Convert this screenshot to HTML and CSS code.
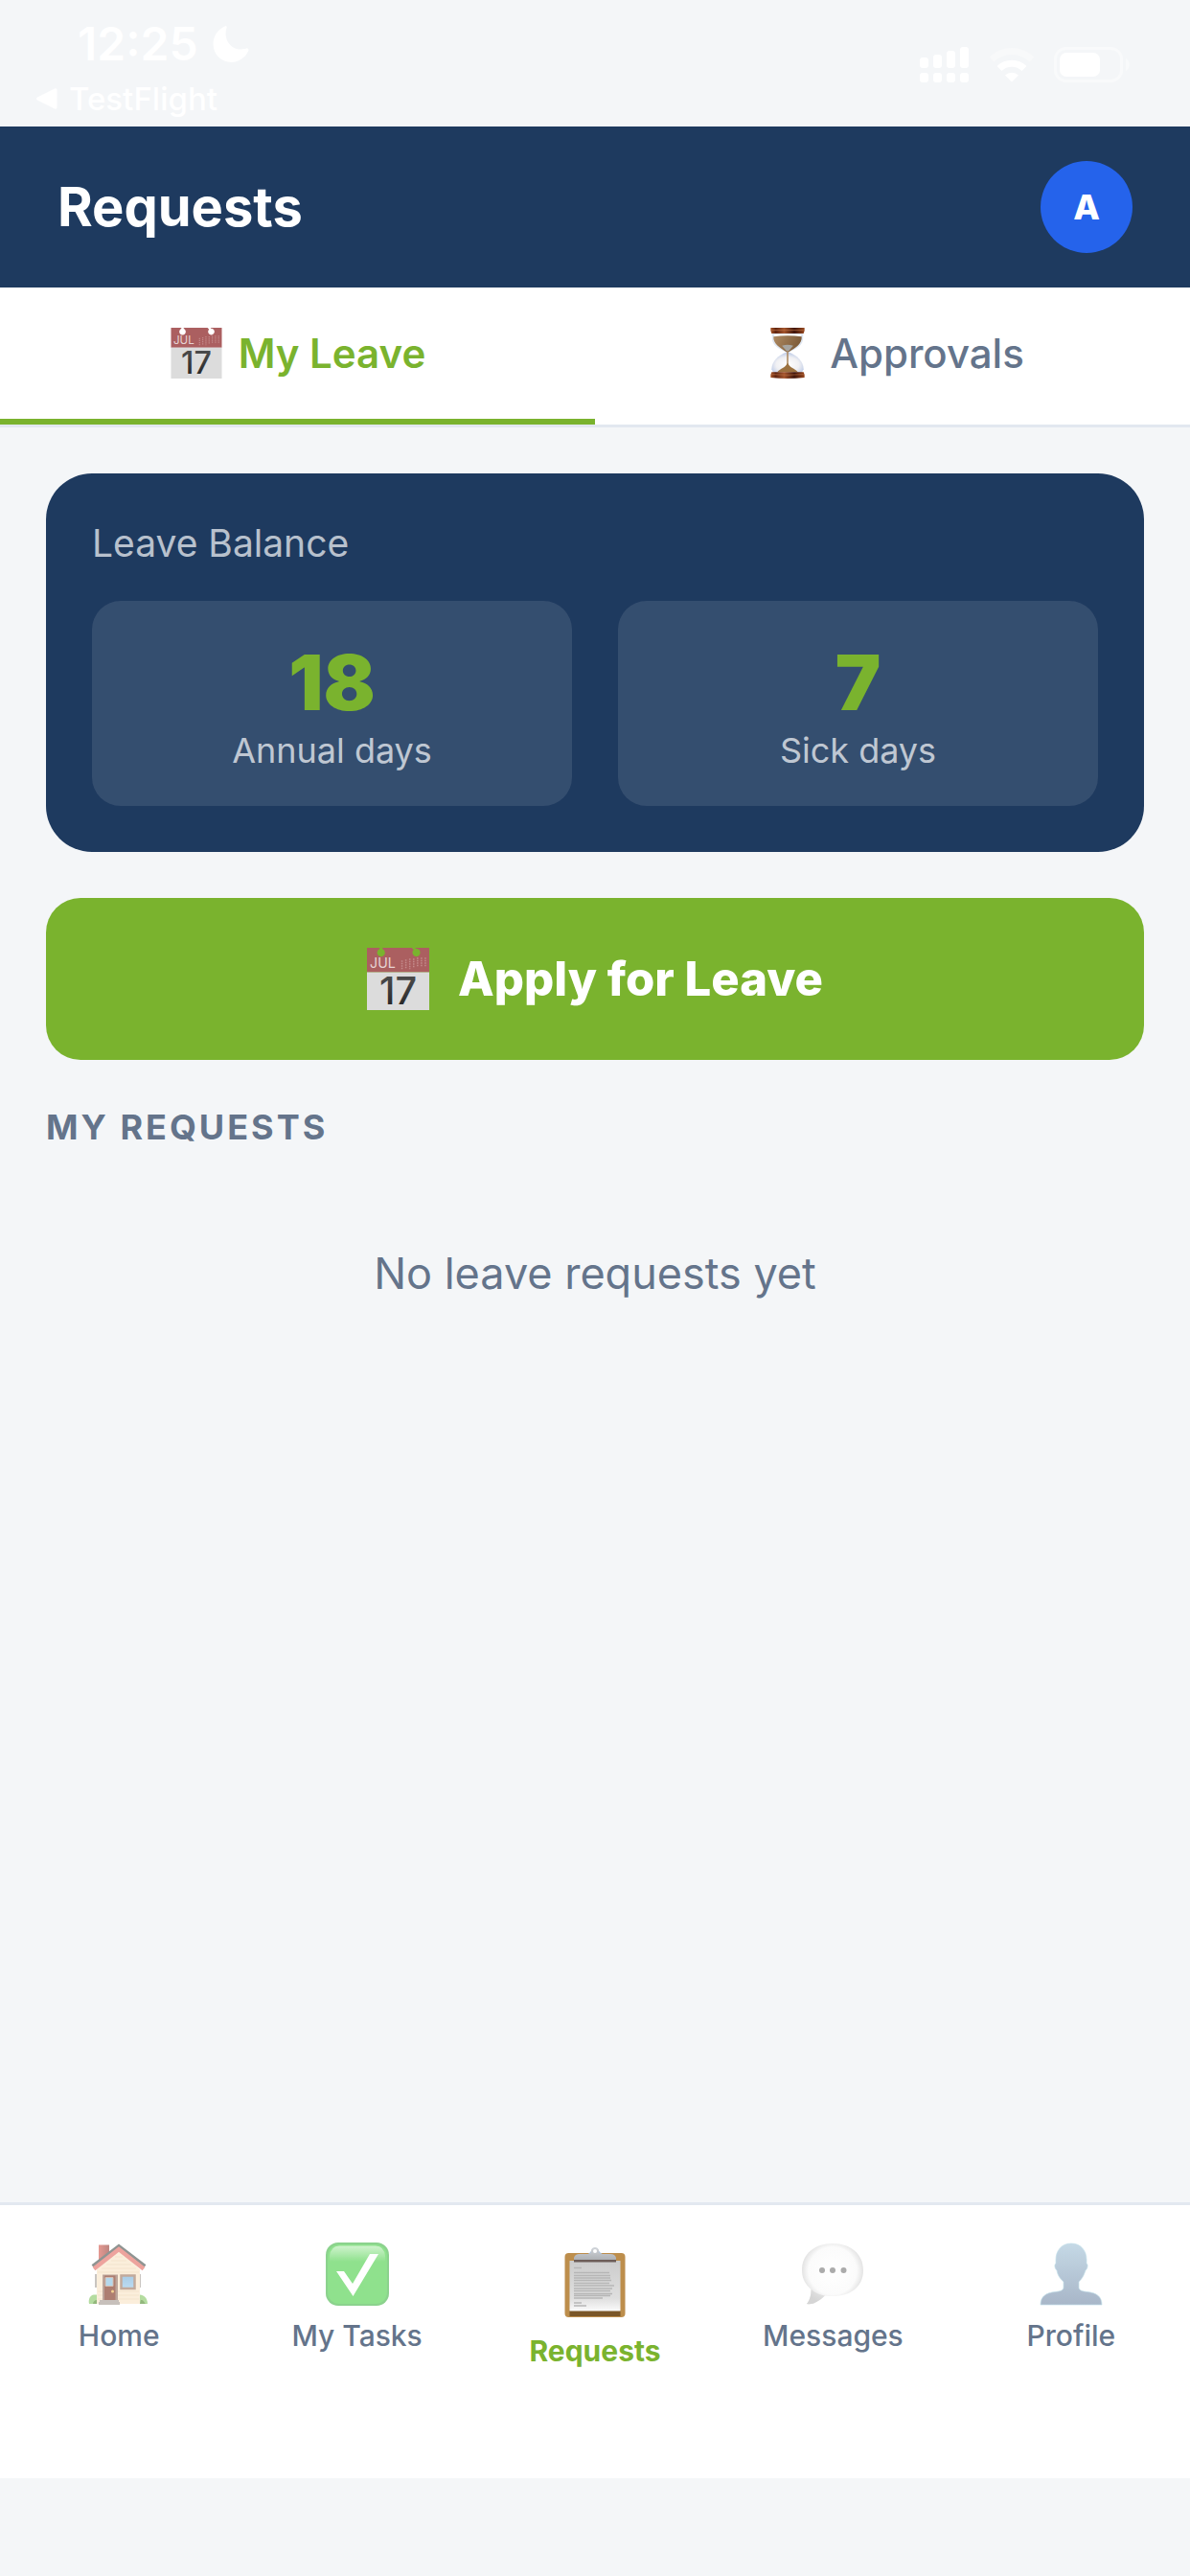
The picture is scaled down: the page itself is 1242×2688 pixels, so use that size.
FILE: index.html
```html
<!DOCTYPE html>
<html lang="en">
<head>
  <meta charset="UTF-8">
  <meta name="viewport" content="width=device-width, initial-scale=1.0">
  <title>Requests</title>
  <link rel="stylesheet" href="styles.css">
</head>
<body>
  <div class="status-bar">
    <div class="status-left">
      <div class="clock">
        <span>12:25</span>
        <svg class="moon" viewBox="0 0 38 38" aria-hidden="true"><path fill="#fff" d="M12.500.500c1.500-.8 2.600.2 2 1.700C13 6 13 12 16 17c4 6.500 11 9 18.500 6.700 2-.7 3.500.6 2.800 2.200C34 33 27.500 38 19.500 38 9 38 .5 29.500.5 19 .5 11 5 4 12.500.500z"/></svg>
      </div>
      <a class="back-link" href="#">
        <svg class="back-arrow" viewBox="0 0 22 22" aria-hidden="true"><path fill="#fff" d="M1 9.500 19 .6c1.600-.7 2.500 0 2.500 1.600v17.600c0 1.600-.9 2.300-2.500 1.600L1 12.500c-1.300-.8-1.300-2.200 0-3z"/></svg>
        <span>TestFlight</span>
      </a>
    </div>
    <div class="status-icons">
      <svg width="52" height="38" viewBox="0 0 52 38" fill="#fff" aria-hidden="true">
        <rect x="0" y="11" width="9" height="11" rx="3"/><rect x="14" y="8" width="9" height="14" rx="3"/>
        <rect x="28" y="4" width="9" height="18" rx="3"/><rect x="42" y="0" width="9" height="22" rx="3"/>
        <rect x="0" y="27" width="9" height="10" rx="3"/><rect x="14" y="27" width="9" height="10" rx="3"/>
        <rect x="28" y="27" width="9" height="10" rx="3"/><rect x="42" y="27" width="9" height="10" rx="3"/>
      </svg>
      <svg width="48" height="38" viewBox="0 0 48 38" fill="none" aria-hidden="true">
        <path stroke="#f8f9fa" stroke-width="7" d="M3 13a30 30 0 0 1 42 0"/>
        <path stroke="#fff" stroke-width="7" d="M11 22.500a18.500 18.500 0 0 1 26 0"/>
        <path fill="#fff" d="M17 29.500a10.500 10.500 0 0 1 14 0L24 36.500z"/>
      </svg>
      <svg width="80" height="38" viewBox="0 0 80 38" aria-hidden="true">
        <rect x="1.500" y="1.500" width="69" height="34" rx="11" fill="none" stroke="#f9fafb" stroke-width="3"/>
        <rect x="6" y="6" width="42" height="25" rx="7" fill="#fff"/>
        <path fill="#f9fafb" d="M75 12c5 2.500 5 10.500 0 13z"/>
      </svg>
    </div>
  </div>

  <header class="app-header">
    <h1>Requests</h1>
    <button class="avatar" type="button" aria-label="Account">A</button>
  </header>

  <div class="tabs">
    <button class="tab active" type="button">
      <svg class="tab-icon" viewBox="0 0 64 64" aria-hidden="true">
        <defs>
          <linearGradient id="ink" x1="0" y1="0" x2="0" y2="1">
            <stop offset="0" stop-color="#555"/>
            <stop offset="1" stop-color="#1f1f1f"/>
          </linearGradient>
        </defs>
        <path fill="#ab5f60" fill-rule="evenodd" d="M0 0H13V1.300A4 4 0 1 0 16 1.300V0H46L48 2A4 4 0 1 0 50 1V0H64V25H0Z"/>
        <path fill="#dcdcdc" d="M0 25h64v39H0z"/>
        <text class="cal-month" x="3" y="21">JUL</text>
        <path stroke="#c48b8b" stroke-width="1.500" stroke-dasharray="1.500 1" d="M36 13v9M40 12v10M44 11v11M48 11v10M52 10v10M56 10v10M60 10v9"/>
        <text class="cal-day" x="32" y="58">17</text>
      </svg>
      <span>My Leave</span>
    </button>
    <button class="tab" type="button">
      <svg class="tab-icon" viewBox="0 0 56 54" aria-hidden="true">
        <defs>
          <linearGradient id="wood" x1="0" x2="1" y1="0" y2="0">
            <stop offset="0" stop-color="#a85527"/><stop offset=".15" stop-color="#5f2410"/><stop offset=".4" stop-color="#a3542c"/>
            <stop offset=".7" stop-color="#3f1409"/><stop offset="1" stop-color="#98481f"/>
          </linearGradient>
          <linearGradient id="sand" x1="0" x2="1" y1="0" y2=".3">
            <stop offset="0" stop-color="#ae8a62"/><stop offset="1" stop-color="#7d5b38"/>
          </linearGradient>
          <radialGradient id="glass" cx=".5" cy=".6" r=".6">
            <stop offset="0" stop-color="#fff"/><stop offset=".6" stop-color="#f0f0f3"/><stop offset="1" stop-color="#b9c8e6"/>
          </radialGradient>
        </defs>
        <path fill="#dfe7f2" d="M11.500 6h33v5c0 7-6 11-15 15h-3c-9-4-15-8-15-15z"/>
        <path fill="#fff" d="M14 7h28v2H14z"/>
        <path fill="url(#sand)" d="M13 9.500q15-2 30 0c.5 8-7 12-14 16.500h-2C20 21.500 12.500 17 13 9.500z"/>
        <path fill="#a7a5a0" d="M22 19q6-2 12 0l-5 6h-2z"/>
        <path fill="url(#glass)" d="M27 26h2c9 3 16 10 16 18l-2 4H13l-2-4c0-8 7-15 16-18z"/>
        <path fill="none" stroke="#a98458" stroke-width="1.500" d="M28 25v15"/>
        <path fill="#9b713f" d="M17 47c4-4 8-4 10.500-9h1c2.500 5 6.500 5 10.500 9z"/>
        <path fill="url(#wood)" d="M10 0h36v3l-1 3H11l-1-3zM11 47h34l1 3v3q-18 2-36 0v-3z"/>
        <path fill="none" stroke="#c27648" stroke-width=".8" opacity=".7" d="M11 2.500h34M11 49.500q17 1.500 34 0"/>
      </svg>
      <span>Approvals</span>
    </button>
  </div>

  <main class="content">
    <section class="balance-card">
      <h2>Leave Balance</h2>
      <div class="balance-grid">
        <div class="balance-item">
          <div class="balance-value">18</div>
          <div class="balance-label">Annual days</div>
        </div>
        <div class="balance-item">
          <div class="balance-value">7</div>
          <div class="balance-label">Sick days</div>
        </div>
      </div>
    </section>

    <button class="apply-btn" type="button">
      <svg class="apply-icon" viewBox="0 0 64 64" aria-hidden="true">
        <path fill="#ab5f60" fill-rule="evenodd" d="M0 0H13V1.300A4 4 0 1 0 16 1.300V0H46L48 2A4 4 0 1 0 50 1V0H64V25H0Z"/>
        <path fill="#dcdcdc" d="M0 25h64v39H0z"/>
        <text class="cal-month" x="3" y="21">JUL</text>
        <path stroke="#c48b8b" stroke-width="1.500" stroke-dasharray="1.500 1" d="M36 13v9M40 12v10M44 11v11M48 11v10M52 10v10M56 10v10M60 10v9"/>
        <text class="cal-day" x="32" y="58">17</text>
      </svg>
      <span>Apply for Leave</span>
    </button>

    <h2 class="section-title">My Requests</h2>
    <p class="empty">No leave requests yet</p>
  </main>

  <nav class="bottom-nav">
    <a class="nav-item" href="#">
      <svg class="nav-icon" viewBox="0 0 66 66" aria-hidden="true">
        <defs>
          <linearGradient id="chimney" x1="0" x2="1"><stop offset="0" stop-color="#e59992"/><stop offset="1" stop-color="#bd8580"/></linearGradient>
          <linearGradient id="pane" x1="0" x2="0" y1="0" y2="1"><stop offset="0" stop-color="#a9cce6"/><stop offset="1" stop-color="#bcdcf2"/></linearGradient>
        </defs>
        <path fill="#c9c5c1" d="M8 33h3v14H8zM53 33h3v14h-3z"/>
        <path fill="url(#chimney)" d="M12 2.500h11v14L12 25z"/>
        <path fill="#fbeedb" d="M10 28 33 8l22 20v36H10z"/>
        <path stroke="#f1e0c9" stroke-width=".7" d="M29 15h8M25 19h16M20 23h26M15 27h36M11 31h43M11 51h43M11 55h43M11 59h43"/>
        <path fill="#b4dca0" d="M2 64c-1-5 1-9 5-9.500h3V64zM55 54.500c4 0 8 3.500 8 9.500h-8z"/>
        <path fill="#92b77c" d="M6 64c0-2 2-4 4-4v4zM56 60c3 0 3 2 5 4h-6z"/>
        <path fill="none" stroke="#8f9492" stroke-width="3" d="M5.500 24.500 33 3.500l27.500 21"/>
        <path fill="none" stroke="#eda39d" stroke-width="4.500" d="M7 27.500 33 7l26 20.500"/>
        <path fill="#bda69b" d="M16 33.500h16V61H16z"/>
        <path fill="#ad7e71" d="M18 34.500h11.500V60H18z"/>
        <path fill="#b5d8ec" stroke="#d5c0b5" d="M19 36.500h8v9h-8z"/>
        <circle cx="26.500" cy="51" r="1.500" fill="#f4d392"/>
        <path fill="url(#pane)" stroke="#c2aa9c" stroke-width="2.500" d="M35.500 34.500h14V48h-14z"/>
        <path fill="#c7c0bb" d="M13 60h20v2h1v3H12v-3h1z"/>
      </svg>
      <span>Home</span>
    </a>
    <a class="nav-item" href="#">
      <svg class="nav-icon" viewBox="0 0 66 66" aria-hidden="true">
        <defs>
          <linearGradient id="gloss" x1="0" x2="0" y1="0" y2="1"><stop offset="0" stop-color="#cff3cd"/><stop offset="1" stop-color="#8fe18d"/></linearGradient>
        </defs>
        <rect width="66" height="66" rx="13" fill="#8bd28d"/>
        <rect x="2" y="2" width="62" height="62" rx="12" fill="#8fe18d"/>
        <path fill="url(#gloss)" d="M4 14Q5 4 14 3.500h38Q61 4 62 14v6H4z"/>
        <path fill="#fff" d="M11 30h8l9 13 18-31h9L28.500 56z"/>
      </svg>
      <span>My Tasks</span>
    </a>
    <a class="nav-item active" href="#">
      <svg class="nav-icon" viewBox="0 0 72 82" aria-hidden="true">
        <defs>
          <linearGradient id="paper" x1="0" x2="0" y1="0" y2="1">
            <stop offset="0" stop-color="#ccc"/><stop offset=".75" stop-color="#dfdfdf"/><stop offset="1" stop-color="#fafafa"/>
          </linearGradient>
          <linearGradient id="clip" x1="0" x2="0" y1="0" y2="1"><stop offset="0" stop-color="#d1d5da"/><stop offset="1" stop-color="#adb0b4"/></linearGradient>
        </defs>
        <rect x="4.500" y="11" width="63" height="67" rx="4" fill="#bd8e4c"/>
        <path fill="#7a5628" d="M9.500 71h53v6h-53z"/>
        <path fill="url(#paper)" d="M9.500 19h53v52.500h-53z"/>
        <path stroke="#b6b6b6" stroke-width="1.500" d="M14 26.500h8M14 31.500h37M14 34.500h38M14 37h38M14 39.500h39M14 42.500h37M14 45h42M14 48h40M14 50.500h38M14 53.500h40M14 55.500h38M14 58h30M14 63h8M14 66h13"/>
        <path fill="#6c5d58" d="M14 17h44v3.500H14z"/>
        <path fill="#a7c3e2" d="M26 13q5-1 7-6h6q2 5 8 6z"/>
        <path fill="url(#clip)" d="M14 18v-2q1-4 6-4h9q3 0 3-4a4.200 4.200 0 0 1 8 0q0 4 3 4h9q5 0 6 4v2z"/>
        <circle cx="36" cy="9" r="2" fill="#fff"/>
      </svg>
      <span>Requests</span>
    </a>
    <a class="nav-item" href="#">
      <svg class="nav-icon" viewBox="0 0 66 66" aria-hidden="true">
        <defs>
          <radialGradient id="bubble" cx=".5" cy=".45" r=".56">
            <stop offset="0" stop-color="#fff"/><stop offset=".7" stop-color="#fbfbfb"/><stop offset="1" stop-color="#d6d6d6"/>
          </radialGradient>
        </defs>
        <path fill="url(#bubble)" d="M33 1C14 1 1 12 1 29c0 9 4 15 9.500 20 0 6-1 11-4.500 15 7 2 15-5 19-8.500q4 .5 8 .5c19 0 32-10 32-27C65 12 52 1 33 1z"/>
        <path fill="#d4d4d4" opacity=".6" d="M10.500 49c0 6-1 11-4.500 15 7 2 15-5 19-8.500-5-.5-10-3-14.500-6.500z"/>
        <g fill="#ababab"><circle cx="22" cy="29" r="3"/><circle cx="33" cy="29" r="3"/><circle cx="44.500" cy="29" r="3"/></g>
      </svg>
      <span>Messages</span>
    </a>
    <a class="nav-item" href="#">
      <svg class="nav-icon" viewBox="0 0 66 66" aria-hidden="true">
        <defs>
          <linearGradient id="person" x1="0" x2="0" y1="0" y2="1"><stop offset="0" stop-color="#c5d9e6"/><stop offset="1" stop-color="#a8b6c8"/></linearGradient>
        </defs>
        <path fill="url(#person)" stroke="#c3dfea" stroke-width=".7" d="M33 1C23 1 17 8.500 17 18v4c-2 1-1 5.500 1 7 1 6 4 9 7 12v6c0 3-4 4-9 4.500C7 52.500 1 56 1 65h64c0-9-6-12.500-15-13.500-5-.5-9-1.500-9-4.500v-6c3-3 5-6 7-12 2-1.500 3-6 1-7v-4C49 8.500 43 1 33 1z"/>
      </svg>
      <span>Profile</span>
    </a>
  </nav>
</body>
</html>
```
FILE: styles.css
```css
* {
  box-sizing: border-box;
}

body {
  margin: 0;
  min-height: 100vh;
  display: flex;
  flex-direction: column;
  padding-bottom: 102px;
  background-color: #f4f6f8;
  color: #64748b;
  font-family: Inter, "Liberation Sans", sans-serif;
}

h1, h2, p {
  margin: 0;
}

button {
  border: none;
  font-family: inherit;
  cursor: pointer;
}

a {
  color: inherit;
  text-decoration: none;
}

svg {
  display: block;
  flex-shrink: 0;
}

/* Lettering inside the calendar icon */
.cal-month {
  font-size: 14px;
  font-weight: 400;
  fill: #e6d3d3;
}

.cal-day {
  font-size: 39px;
  font-weight: 500;
  text-anchor: middle;
  fill: url(#ink);
}

/* Status bar */
.status-bar {
  display: flex;
  justify-content: space-between;
  height: 132px;
  padding: 16px 48px 0 38px;
  color: white;
}

.clock {
  display: flex;
  align-items: center;
  gap: 15px;
  padding-left: 43px;
  font-size: 48px;
  font-weight: 600;
  line-height: 60px;
}

.moon {
  width: 38px;
  height: 38px;
}

.back-link {
  display: flex;
  align-items: center;
  gap: 12px;
  font-size: 33px;
  font-weight: 500;
  line-height: 54px;
}

.back-arrow {
  width: 22px;
  height: 22px;
}

.status-icons {
  display: flex;
  align-items: flex-start;
  gap: 20px;
  padding: 33px 14px 0 0;
}

/* Header */
.app-header {
  display: flex;
  align-items: center;
  justify-content: space-between;
  padding: 36px 60px;
  background-color: #1e3a5f;
  color: white;
}

.app-header h1 {
  font-size: 56px;
  font-weight: 700;
}

.avatar {
  width: 96px;
  height: 96px;
  padding: 0;
  border-radius: 50%;
  background-color: #2563eb;
  color: white;
  font-size: 36px;
  font-weight: 800;
}

/* Tabs */
.tabs {
  display: flex;
  background-color: white;
  border-bottom: 3px solid #e2e8f0;
}

.tab {
  flex: 1;
  display: flex;
  align-items: center;
  justify-content: center;
  gap: 16px;
  padding: 42px 0;
  border-bottom: 6px solid transparent;
  background: none;
  color: #64748b;
  font-size: 42px;
  font-weight: 500;
  line-height: 53px;
}

.tab.active {
  border-bottom-color: #7ab32e;
  color: #7ab32e;
  font-weight: 600;
}

.tab-icon {
  width: 56px;
  height: 53px;
}

/* Page content */
.content {
  flex: 1;
  padding: 48px;
}

.balance-card {
  padding: 48px;
  border-radius: 48px;
  background-color: #1e3a5f;
  color: rgba(255, 255, 255, 0.7);
}

.balance-card h2 {
  margin-bottom: 36px;
  font-size: 39px;
  font-weight: 400;
  line-height: 49px;
}

.balance-grid {
  display: grid;
  grid-template-columns: 1fr 1fr;
  gap: 48px;
}

.balance-item {
  padding: 36px;
  border-radius: 30px;
  background-color: rgba(255, 255, 255, 0.1);
  text-align: center;
}

.balance-value {
  color: #7ab32e;
  font-size: 80px;
  font-weight: 900;
  line-height: 98px;
}

.balance-label {
  font-size: 36px;
  line-height: 44px;
}

.apply-btn {
  display: flex;
  align-items: center;
  justify-content: center;
  gap: 30px;
  width: 100%;
  margin: 48px 0;
  padding: 52px;
  border-radius: 36px;
  background-color: #7ab32e;
  color: white;
  font-size: 49px;
  font-weight: 800;
  line-height: 61px;
}

.apply-icon {
  width: 65px;
  height: 65px;
}

.section-title {
  font-size: 36px;
  font-weight: 700;
  letter-spacing: 3px;
  line-height: 44px;
  text-transform: uppercase;
}

.empty {
  padding: 104px 0;
  font-size: 45px;
  line-height: 54px;
  text-align: center;
}

/* Bottom navigation */
.bottom-nav {
  display: flex;
  height: 288px;
  padding-top: 39px;
  border-top: 3px solid #e2e8f0;
  background-color: white;
}

.nav-item {
  flex: 1;
  display: flex;
  flex-direction: column;
  align-items: center;
  gap: 13px;
  font-size: 30px;
  font-weight: 500;
  line-height: 36px;
}

.nav-icon {
  width: 66px;
  height: 66px;
}

.nav-item.active {
  color: #7ab32e;
  font-weight: 700;
}

.nav-item.active .nav-icon {
  width: 72px;
  height: 82px;
}
```
